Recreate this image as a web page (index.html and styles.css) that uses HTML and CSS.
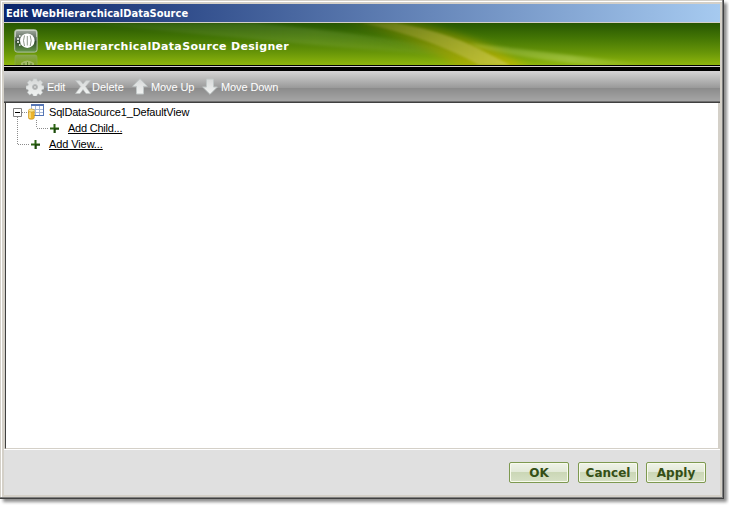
FILE: index.html
```html
<!DOCTYPE html>
<html lang="en">
<head>
<meta charset="utf-8">
<title>Edit WebHierarchicalDataSource</title>
<link rel="stylesheet" href="styles.css">
</head>
<body>
<svg class="defs" width="0" height="0" aria-hidden="true">
  <defs>
    <linearGradient id="silver" x1="0" y1="0" x2="0" y2="1"><stop offset="0" stop-color="#d6d8d8"/><stop offset="1" stop-color="#f1f3f2"/></linearGradient>
    <symbol id="plus" viewBox="0 0 9 9"><path d="M3.500 0h2v3.500H9v2H5.500V9h-2V5.500H0v-2h3.500z" fill="#2c6413"/><path d="M4 4.500h5v1H5.500V9h-1z" fill="#153d08"/></symbol>
  </defs>
</svg>
<main class="window">
  <header class="titlebar"><span>Edit WebHierarchicalDataSource</span></header>
  <section class="banner">
    <svg class="banner-art" viewBox="0 0 716 42" preserveAspectRatio="none">
      <defs>
        <linearGradient id="haze" x1="0" x2="1"><stop offset="0" stop-color="#fff" stop-opacity=".03"/><stop offset=".55" stop-color="#d6edaa" stop-opacity=".13"/><stop offset="1" stop-color="#d6edaa" stop-opacity="0"/></linearGradient>
        <linearGradient id="gold" x1="0" x2="1"><stop offset="0" stop-color="#a69000" stop-opacity=".1"/><stop offset=".45" stop-color="#aa9a00" stop-opacity=".42"/><stop offset="1" stop-color="#d2bd00" stop-opacity=".75"/></linearGradient>
        <linearGradient id="beam" x1="0" x2="1"><stop offset="0" stop-color="#b5a650" stop-opacity=".2"/><stop offset="1" stop-color="#d1d267" stop-opacity=".55"/></linearGradient>
        <linearGradient id="tail" x1="0" x2="1"><stop offset="0" stop-color="#d7e779" stop-opacity=".2"/><stop offset=".55" stop-color="#d3ea88" stop-opacity=".35"/><stop offset="1" stop-color="#d3ea88" stop-opacity="0"/></linearGradient>
        <filter id="soft" x="-10%" y="-30%" width="120%" height="160%"><feGaussianBlur stdDeviation="4"/></filter>
        <filter id="edge"><feGaussianBlur stdDeviation=".8"/></filter>
        <filter id="veil"><feGaussianBlur stdDeviation="1.500"/></filter>
      </defs>
      <path d="M80 0H250Q370 10 500 36Q360 28 80 0z" fill="url(#haze)" filter="url(#veil)"/>
      <path d="M330 -4H395Q450 9 490 26L526 46H456Q410 15 330 -4z" fill="url(#gold)" filter="url(#soft)"/>
      <path d="M358 0H391Q439 8 475 26L506 42H475Q427 15 358 0z" fill="url(#beam)" filter="url(#edge)"/>
      <path d="M465 20Q530 28 650 42H590Q535 38 475 25z" fill="url(#tail)" filter="url(#veil)"/>
    </svg>
    <svg class="logo" viewBox="0 0 24 38">
      <defs>
        <linearGradient id="tile" x1="0" y1="0" x2="0" y2="1"><stop stop-color="#a6aea3"/><stop offset=".5" stop-color="#435345"/><stop offset=".52" stop-color="#2d452a"/><stop offset="1" stop-color="#699a4a"/></linearGradient>
        <linearGradient id="mirror" x1="0" y1="0" x2="0" y2="1"><stop stop-color="#96ab74" stop-opacity=".7"/><stop offset="1" stop-color="#698d25" stop-opacity=".35"/></linearGradient>
      </defs>
      <rect x=".7" y=".7" width="22.400" height="22.400" rx="2.500" fill="url(#tile)" stroke="#b1bfa8" stroke-width="1"/>
      <path d="M1.500 8V3q0-1.500 1.500-1.500h18q1.500 0 1.500 1.500v5" fill="none" stroke="#d8ddd4" stroke-width=".7"/>
      <ellipse cx="13.300" cy="11.700" rx="7.300" ry="7.200" fill="#fff"/>
      <path d="M10.500 6.500Q8.500 11.500 10.500 17M13.300 7v9.500M16.200 6.500Q18.200 11.500 16.200 17" stroke="#737e6e" stroke-width=".8" fill="none"/>
      <path d="M3 10h2M3 13h2M5 7h1.500M5 16h1.500" stroke="#fff" stroke-width="1.500"/>
      <path d="M1 38V28q0-2 2-2h18q2 0 2 2v10" fill="url(#mirror)" stroke="#8bab50" stroke-width=".7"/>
      <path d="M7 34q6-5 13 0v4H7z" fill="#b5c489" opacity=".65"/><path d="M10 34v4M13.500 33v5M17 34v4" stroke="#5d8523" stroke-width="1"/>
    </svg>
    <h1>WebHierarchicalDataSource Designer</h1>
  </section>
  <div class="separator"></div>
  <nav class="toolbar">
    <button class="tool edit"><svg viewBox="0 0 18 18"><path d="M7.300.7h3.400l.5 2.100 1.200.5 1.900-1.200 2.400 2.400-1.200 1.900.5 1.200 2 .5v2.800l-2 .6-.5 1.200 1.200 1.900-2.400 2.300-1.900-1.100-1.200.5-.5 2H7.300l-.5-2-1.200-.5-1.900 1.100-2.400-2.300 1.200-1.900-.5-1.200-2-.6V8.100l2-.5.500-1.200-1.200-1.900 2.400-2.400 1.900 1.200 1.200-.5z" fill="url(#silver)" stroke="#bec4c4" stroke-width=".6"/><circle cx="9" cy="9" r="2.500" fill="#aaa" stroke="#b9bdbe"/><circle cx="9" cy="9" r="1" fill="#d6d8d8"/></svg><span>Edit</span></button>
    <button class="tool delete"><svg viewBox="0 0 16 14"><path d="M.5.500H5L8 4l3-3.500h4.500L10.500 6.500 15.500 13.500H11L8 9.500 5 13.500H.500L5.700 6.500z" fill="url(#silver)" stroke="#bfc5c5" stroke-width=".6"/></svg><span>Delete</span></button>
    <button class="tool up"><svg viewBox="0 0 16 17"><path d="M8 .7L15.300 8.300H11.500V16H4.500V8.300H.7z" fill="url(#silver)" stroke="#c0c6c6"/></svg><span>Move Up</span></button>
    <button class="tool down"><svg viewBox="0 0 16 17"><path d="M4.500 1h7v8h3.800L8 16.300.7 9H4.500z" fill="url(#silver)" stroke="#c0c6c6"/></svg><span>Move Down</span></button>
  </nav>
  <section class="tree">
    <svg class="tree-lines" viewBox="0 0 45 50"><path d="M11.500 14v27M12 41.500h11M16 9.500h7M30.500 17v8M31 25.500h11" stroke="#8c8c8c" stroke-dasharray="1 1" fill="none"/></svg>
    <div class="row root">
      <svg class="toggle" viewBox="0 0 9 9"><path d="M.5.500h8v8h-8z" fill="#fff" stroke="#808080"/><path d="M2 4.500h5" stroke="#000"/></svg>
      <svg class="source" viewBox="0 0 16 16"><path d="M3 0h13v12H3z" fill="#fff"/><path d="M3.500 1v10.500h12V1M3 5.500h13M3 8.500h13M7.500 2v10M11.500 2v10" fill="none" stroke="#a8b9d6"/><path d="M3 0h13v2H3zM15 0h1v12h-1zM6 11h10v1H6z" fill="#5676b5"/><path d="M.3 6.500v7q0 1.800 3 1.800t3-1.800v-7" fill="#edb52c" stroke="#c58d18" stroke-width=".6"/><path d="M2 8v6" stroke="#ffeb9a" stroke-width="1.300"/><ellipse cx="3.300" cy="6.500" rx="3" ry="1.500" fill="#ffe68a" stroke="#c5931f" stroke-width=".6"/></svg>
      <span>SqlDataSource1_DefaultView</span>
    </div>
    <div class="row child"><svg class="plus"><use href="#plus"/></svg><a>Add Child...</a></div>
    <div class="row view"><svg class="plus"><use href="#plus"/></svg><a>Add View...</a></div>
  </section>
  <footer class="actions"><button>OK</button><button>Cancel</button><button>Apply</button></footer>
</main>
</body>
</html>
```

FILE: styles.css
```css
* { box-sizing: border-box; }
html { height: 505px; overflow: hidden; }
body { margin: 0; height: 505px; background: #fff; font-family: "Liberation Sans", sans-serif; font-size: 11px; }
.defs { position: absolute; }
button { font: inherit; border: 0; padding: 0; background: none; white-space: nowrap; }
.window { width: 724px; height: 499px; display: flex; flex-direction: column; padding: 4px; background: #d4d0c8; box-shadow: inset -1px -1px #404040, inset -2px -2px #808080, inset 1px 1px #d4d0c8, inset 2px 2px #fff, 3px 3px 3px rgba(0, 0, 0, .45); }
.titlebar { height: 18px; flex: none; background: linear-gradient(90deg, #0a246a, #a6caf0); color: #fff; padding-left: 2px; font: bold 11px/19px "DejaVu Sans Condensed", "DejaVu Sans", sans-serif; font-stretch: condensed; }
.titlebar span { letter-spacing: .02px; }
.banner { height: 42px; flex: none; margin-top: 1px; position: relative; display: flex; background: linear-gradient(#265602, #437504 35%, #679508 70%, #8fb60c); overflow: hidden; }
.banner-art { position: absolute; inset: 0; width: 716px; height: 42px; }
.logo { width: 24px; height: 38px; flex: none; margin: 6px 0 0 10px; z-index: 1; }
.banner h1 { margin: 15px 0 0 7px; font: bold 11px/18px "DejaVu Sans", sans-serif; letter-spacing: .33px; color: #fff; white-space: nowrap; z-index: 1; }
.separator { height: 6px; flex: none; background: linear-gradient(#000 1px, #d4d0c8 1px 2px, #000 2px); }
.toolbar { height: 32px; flex: none; display: flex; background: linear-gradient(#d6d4d6, #c7c7c7 4px, #999 17px, #8b8b8b 17px, #a5a5a5 30px, #6f6f6f 30px 31px, #404040 31px); color: #fff; padding-left: 22px; }
.tool { height: 31px; display: flex; align-items: center; color: #fff; }
.tool svg { flex: none; }
.edit { width: 49px; letter-spacing: -.25px; }
.edit svg { width: 18px; height: 18px; margin-right: 3px; }
.delete { width: 57px; }
.delete svg { width: 16px; height: 14px; margin-right: 1px; }
.up { width: 70px; }
.up svg, .down svg { width: 16px; height: 17px; margin-right: 3px; }
.up, .down { letter-spacing: -.1px; }
.tree { height: 346px; flex: none; position: relative; background: #fff; border: 1px solid #d4d0c8; border-left-color: #404040; border-top: 0; margin-right: 1px; padding-top: 1px; margin-left: 1px; }
.tree-lines { position: absolute; left: 0; top: 0; width: 45px; height: 50px; }
.row { height: 16px; position: relative; display: flex; align-items: center; white-space: nowrap; color: #000; }
.root { padding-left: 7px; letter-spacing: -.17px; }
.toggle { width: 9px; height: 9px; margin-right: 6px; }
.source { width: 16px; height: 16px; margin-right: 5px; }
.plus { width: 9px; height: 9px; margin-right: 9px; }
.child { padding-left: 44px; letter-spacing: -.22px; }
.view { padding-left: 25px; letter-spacing: -.1px; }
.row a { text-decoration: underline; text-underline-offset: 1px; }
.actions { flex: 1; background: #e0e0e0; display: flex; justify-content: flex-end; gap: 8px; padding: 12px 14px 0 0; border-top: 1px solid #fff; }
.actions button { width: 60px; height: 21px; border: 1px solid #7d9950; border-radius: 2px; box-shadow: inset 0 0 0 1px #f8faed; background: linear-gradient(#f0f3e9, #e2e9d7 48%, #cbd7b6 50%, #d6e0c5); color: #344f16; font: bold 12px/18px "DejaVu Sans", sans-serif; }
.actions button:first-child { margin-right: 1px; }
```
